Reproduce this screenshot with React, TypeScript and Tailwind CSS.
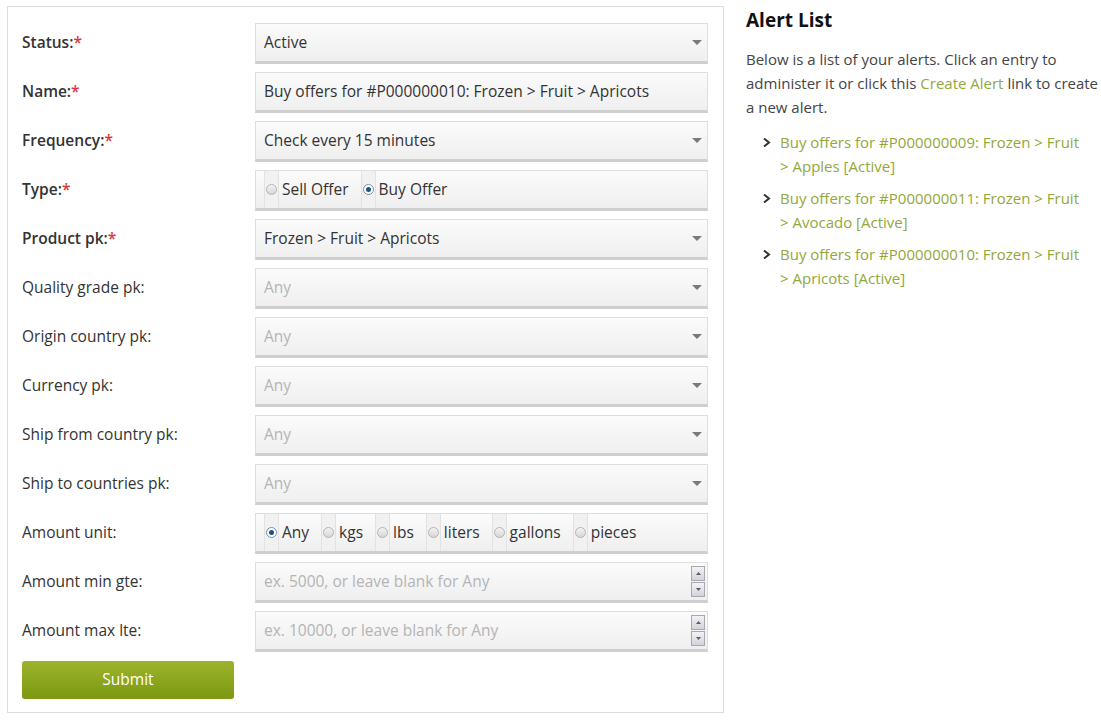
import React from 'react';

const font = { fontFamily: '"Open Sans", "Liberation Sans", sans-serif' };

interface FieldRow {
  label: string;
  required?: boolean;
  kind: 'select' | 'text' | 'radio' | 'number';
  value?: string;
  placeholder?: string;
  options?: { label: string; checked?: boolean }[];
}

const rows: FieldRow[] = [
  { label: 'Status:', required: true, kind: 'select', value: 'Active' },
  { label: 'Name:', required: true, kind: 'text', value: 'Buy offers for #P000000010: Frozen > Fruit > Apricots' },
  { label: 'Frequency:', required: true, kind: 'select', value: 'Check every 15 minutes' },
  {
    label: 'Type:',
    required: true,
    kind: 'radio',
    options: [{ label: 'Sell Offer' }, { label: 'Buy Offer', checked: true }],
  },
  { label: 'Product pk:', required: true, kind: 'select', value: 'Frozen > Fruit > Apricots' },
  { label: 'Quality grade pk:', kind: 'select', placeholder: 'Any' },
  { label: 'Origin country pk:', kind: 'select', placeholder: 'Any' },
  { label: 'Currency pk:', kind: 'select', placeholder: 'Any' },
  { label: 'Ship from country pk:', kind: 'select', placeholder: 'Any' },
  { label: 'Ship to countries pk:', kind: 'select', placeholder: 'Any' },
  {
    label: 'Amount unit:',
    kind: 'radio',
    options: [
      { label: 'Any', checked: true },
      { label: 'kgs' },
      { label: 'lbs' },
      { label: 'liters' },
      { label: 'gallons' },
      { label: 'pieces' },
    ],
  },
  { label: 'Amount min gte:', kind: 'number', placeholder: 'ex. 5000, or leave blank for Any' },
  { label: 'Amount max lte:', kind: 'number', placeholder: 'ex. 10000, or leave blank for Any' },
];

const alerts = [
  'Buy offers for #P000000009: Frozen > Fruit > Apples [Active]',
  'Buy offers for #P000000011: Frozen > Fruit > Avocado [Active]',
  'Buy offers for #P000000010: Frozen > Fruit > Apricots [Active]',
];

const boxClass =
  'h-[41px] w-full flex items-center border border-[#dedede] border-b-[3px] border-b-[#cfcfcf] bg-gradient-to-b from-[#fbfbfb] to-[#efefef] text-[15.5px]';

const Radio = ({ checked }: { checked?: boolean }) => (
  <span className="h-full flex items-center px-[1px] border-x border-[#e2e2e2] bg-[#f1f1f1]">
    <span
      className={`w-[11px] h-[11px] rounded-full border flex items-center justify-center ${
        checked ? 'border-[#7d8fa5] bg-white' : 'border-[#b5b5b5] bg-gradient-to-b from-[#f4f4f4] to-[#d6d6d6]'
      }`}
    >
      {checked && <span className="w-[5px] h-[5px] rounded-full bg-[#1d5287]" />}
    </span>
  </span>
);

const Caret = () => (
  <svg width="10" height="6" viewBox="0 0 10 6" className="ml-auto mr-[5px]">
    <path d="M0 0 L10 0 L5 5 Z" fill="#7a7a7a" />
  </svg>
);

const Spinner = () => (
  <div className="ml-auto mr-[2px] flex flex-col gap-[1px]">
    {[0, 1].map((i) => (
      <div
        key={i}
        className="w-[14px] h-[15px] border border-[#a8a8b0] bg-gradient-to-b from-[#f3f3f5] to-[#d3d3da] flex items-center justify-center"
      >
        <svg width="5" height="3" viewBox="0 0 5 3">
          <path d={i === 0 ? 'M0 3 L5 3 L2.5 0 Z' : 'M0 0 L5 0 L2.5 3 Z'} fill="#5a5a6a" />
        </svg>
      </div>
    ))}
  </div>
);

const Field = ({ row }: { row: FieldRow }) => {
  if (row.kind === 'radio') {
    return (
      <div className={`${boxClass} pl-[8px]`}>
        {row.options!.map((o) => (
          <span key={o.label} className="h-full flex items-center mr-[12px]">
            <Radio checked={o.checked} />
            <span className="ml-[3px] text-[#333]">{o.label}</span>
          </span>
        ))}
      </div>
    );
  }
  return (
    <div className={`${boxClass} pl-[8px]`}>
      {row.value ? (
        <span className="text-[#333]">{row.value}</span>
      ) : (
        <span className="text-[#b4b4b4]">{row.placeholder}</span>
      )}
      {row.kind === 'select' && <Caret />}
      {row.kind === 'number' && <Spinner />}
    </div>
  );
};

export default function App() {
  return (
    <div className="flex items-start bg-white min-h-[723px] pl-[7px] pt-[6px]" style={font}>
      <div className="w-[717px] shrink-0 border border-[#dddddd] pl-[14px] pr-[15px] pt-[16px] pb-[13px]">
        <div className="flex flex-col gap-[8px]">
          {rows.map((r) => (
            <div key={r.label} className="flex items-center">
              <div
                className={`w-[233px] shrink-0 text-[15.5px] text-[#333] -mt-[2px] ${
                  r.required ? 'font-semibold' : ''
                }`}
              >
                {r.label}
                {r.required && <span className="text-[#d9363e]">*</span>}
              </div>
              <Field row={r} />
            </div>
          ))}
        </div>
        <button className="mt-[9px] w-[212px] h-[38px] rounded-[3px] bg-gradient-to-b from-[#9db52a] to-[#7d9712] text-white text-[15.5px]">
          Submit
        </button>
      </div>
      <div className="ml-[22px] w-[352px] shrink-0 pt-[1px]">
        <h2 className="text-[19px] font-bold text-[#111] leading-[26px]">Alert List</h2>
        <p className="mt-[14px] text-[15px] leading-[24px] text-[#444] whitespace-nowrap">
          Below is a list of your alerts. Click an entry to
          <br />
          administer it or click this <a className="text-[#93a73a]">Create Alert</a> link to create
          <br />a new alert.
        </p>
        <ul className="mt-[11px] pl-[17px] flex flex-col gap-[8px]">
          {alerts.map((a) => (
            <li key={a} className="flex items-start text-[15px] leading-[24px]">
              <svg width="8" height="9" viewBox="0 0 8 9" className="mt-[8px] mr-[9px] shrink-0">
                <path d="M1 0.5 L6 4.5 L1 8.5" stroke="#333" strokeWidth="2" fill="none" />
              </svg>
              <a className="text-[#93a73a] w-[310px]">{a}</a>
            </li>
          ))}
        </ul>
      </div>
    </div>
  );
}
